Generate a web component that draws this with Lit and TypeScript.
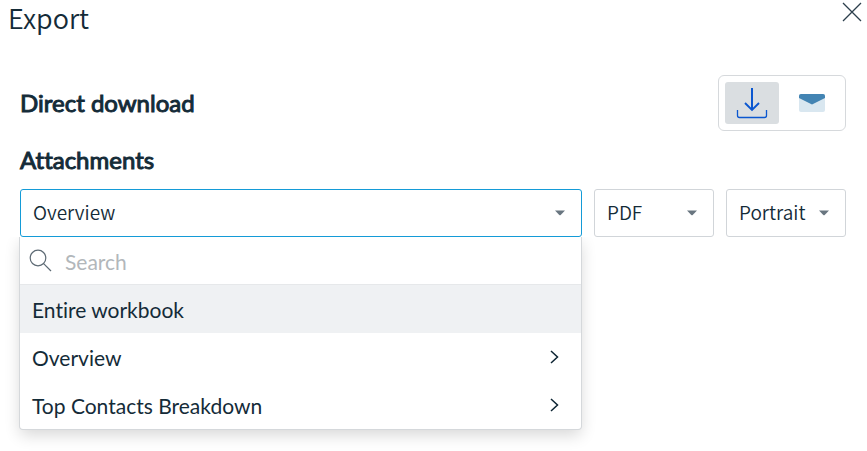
import { LitElement, html, css } from "lit";
import { customElement, state } from "lit/decorators.js";

interface MenuItem {
  label: string;
  nested: boolean;
}

const ITEMS: MenuItem[] = [
  { label: "Entire workbook", nested: false },
  { label: "Overview", nested: true },
  { label: "Top Contacts Breakdown", nested: true },
];

@customElement("app-root")
export class AppRoot extends LitElement {
  @state() private mode = "download";
  @state() private highlighted = 0;

  static styles = css`
    :host {
      display: block;
      min-height: 100vh;
      color: #142b38;
      background: #fff;
      font-family: "Lato", "Liberation Sans", sans-serif;
      font-size: 21px;
      font-variant-ligatures: none;
    }
    * {
      box-sizing: border-box;
    }
    button,
    input,
    select {
      font: inherit;
      color: inherit;
      margin: 0;
    }
    button {
      border: 0;
      padding: 0;
      background: none;
      cursor: pointer;
    }
    svg {
      display: block;
    }
    .header {
      display: flex;
      justify-content: space-between;
      align-items: flex-start;
      height: 40px;
      padding: 0 4px 0 8px;
    }
    .title {
      margin: 0;
      font: 350 27px/36px "Noto Sans CJK SC", sans-serif;
    }
    .body {
      padding: 35px 21px 24px 20px;
    }
    .row {
      display: flex;
      justify-content: space-between;
      align-items: center;
    }
    .heading {
      margin: 0;
      font-size: 24px;
      line-height: 32px;
      font-weight: 400;
      -webkit-text-stroke: 1px currentColor;
    }
    .attachments {
      padding: 13px 0;
    }
    .toggle {
      display: flex;
      gap: 6px;
      padding: 6px;
      border: 1px solid #d6d9dc;
      border-radius: 6px;
    }
    .mode {
      display: grid;
      place-items: center;
      width: 54px;
      height: 42px;
      border-radius: 3px;
    }
    .mode.active {
      background: #dadee1;
    }
    .selects {
      display: grid;
      grid-template-columns: 1fr 120px 120px;
      gap: 12px;
    }
    .field {
      position: relative;
      display: block;
    }
    .select {
      display: block;
      width: 100%;
      height: 48px;
      padding: 0 32px 4px 12px;
      appearance: none;
      border: 1px solid #d1d5d9;
      border-radius: 3px;
      background: #fff;
      font-family: "Noto Sans CJK SC", sans-serif;
      font-size: 19px;
      font-weight: 350;
      outline: none;
    }
    .select.open {
      border-color: #149bd7;
    }
    .caret {
      position: absolute;
      right: 17px;
      top: 21px;
      pointer-events: none;
    }
    .menu {
      position: absolute;
      top: 100%;
      left: 0;
      right: 1px;
      background: #fff;
      border-radius: 0 0 3px 3px;
      box-shadow: 0 0 0 1px #d5d8db, 0 6px 16px rgba(0, 0, 0, 0.16);
      clip-path: inset(0 -24px -32px -24px);
    }
    .search {
      display: flex;
      align-items: center;
      gap: 12px;
      height: 48px;
      padding: 0 12px 0 9px;
      border-bottom: 1px solid #e6e8ea;
    }
    .query {
      flex: 1;
      min-width: 0;
      padding: 1px 0 0;
      border: 0;
      outline: none;
      background: none;
    }
    .query::placeholder {
      color: #b2b7bb;
      opacity: 1;
    }
    .item {
      display: flex;
      align-items: center;
      justify-content: space-between;
      width: 100%;
      height: 48px;
      padding: 0 22px 0 12px;
      text-align: left;
    }
    .item.highlighted {
      background: #eff1f3;
    }
    .label {
      padding-top: 1px;
    }
  `;

  private caret() {
    return html`<svg class="caret" width="10" height="6" viewBox="0 0 10 6" aria-hidden="true">
      <path d="M0 0.4H10L5.7 4.9Q5 5.5 4.3 4.9Z" fill="#697680" />
    </svg>`;
  }

  render() {
    return html`
      <header class="header">
        <h1 class="title">Export</h1>
        <button class="close" aria-label="Close">
          <svg width="22" height="24" viewBox="0 0 22 24" aria-hidden="true">
            <path d="M2 3L20 21M20 3L2 21" fill="none" stroke="#2c3f4c" stroke-width="1.3" />
          </svg>
        </button>
      </header>
      <main class="body">
        <div class="row">
          <h2 class="heading">Direct download</h2>
          <div class="toggle">
            <button
              class="mode ${this.mode === "download" ? "active" : ""}"
              aria-label="Direct download"
              @click=${() => (this.mode = "download")}
            >
              <svg width="32" height="32" viewBox="0 0 32 32" aria-hidden="true">
                <g fill="none" stroke="#0b57d0">
                  <path d="M16 1V23" stroke-width="2" />
                  <path d="M9 16L16 23L23 16" stroke-width="1.9" />
                  <path d="M1.5 23V28.5Q1.5 30.5 3.5 30.5H28.5Q30.5 30.5 30.5 28.5V23" stroke-width="1.3" />
                </g>
              </svg>
            </button>
            <button
              class="mode ${this.mode === "email" ? "active" : ""}"
              aria-label="Email"
              @click=${() => (this.mode = "email")}
            >
              <svg width="26" height="18" viewBox="0 0 26 18" aria-hidden="true">
                <rect width="26" height="18" rx="2" fill="#d9e7f0" />
                <path d="M2 0H24Q26 0 26 2V4L13 10.5L0 4V2Q0 0 2 0Z" fill="#4384b3" />
              </svg>
            </button>
          </div>
        </div>
        <h2 class="heading attachments">Attachments</h2>
        <div class="selects">
          <div class="field">
            <select class="select open" aria-label="Attachment">
              <option>Overview</option>
            </select>
            ${this.caret()}
            <div class="menu">
              <label class="search">
                <svg width="24" height="24" viewBox="0 0 24 24" aria-hidden="true">
                  <g fill="none" stroke="#5d6a74" stroke-width="1.2">
                    <circle cx="9" cy="9" r="7.8" />
                    <path d="M14.6 14.6L22 22" />
                  </g>
                </svg>
                <input class="query" type="text" placeholder="Search" aria-label="Search" />
              </label>
              ${ITEMS.map(
                (item, i) => html`<button
                  class="item ${i === this.highlighted ? "highlighted" : ""}"
                  @mouseenter=${() => (this.highlighted = i)}
                >
                  <span class="label">${item.label}</span>
                  ${item.nested
                    ? html`<svg width="9" height="14" viewBox="0 0 9 14" aria-hidden="true">
                        <path d="M1 1L7.5 7L1 13" fill="none" stroke="#0c2433" stroke-width="1.5" />
                      </svg>`
                    : null}
                </button>`
              )}
            </div>
          </div>
          <div class="field">
            <select class="select" aria-label="Format">
              <option>PDF</option>
            </select>
            ${this.caret()}
          </div>
          <div class="field">
            <select class="select" aria-label="Orientation">
              <option>Portrait</option>
            </select>
            ${this.caret()}
          </div>
        </div>
      </main>
    `;
  }
}
